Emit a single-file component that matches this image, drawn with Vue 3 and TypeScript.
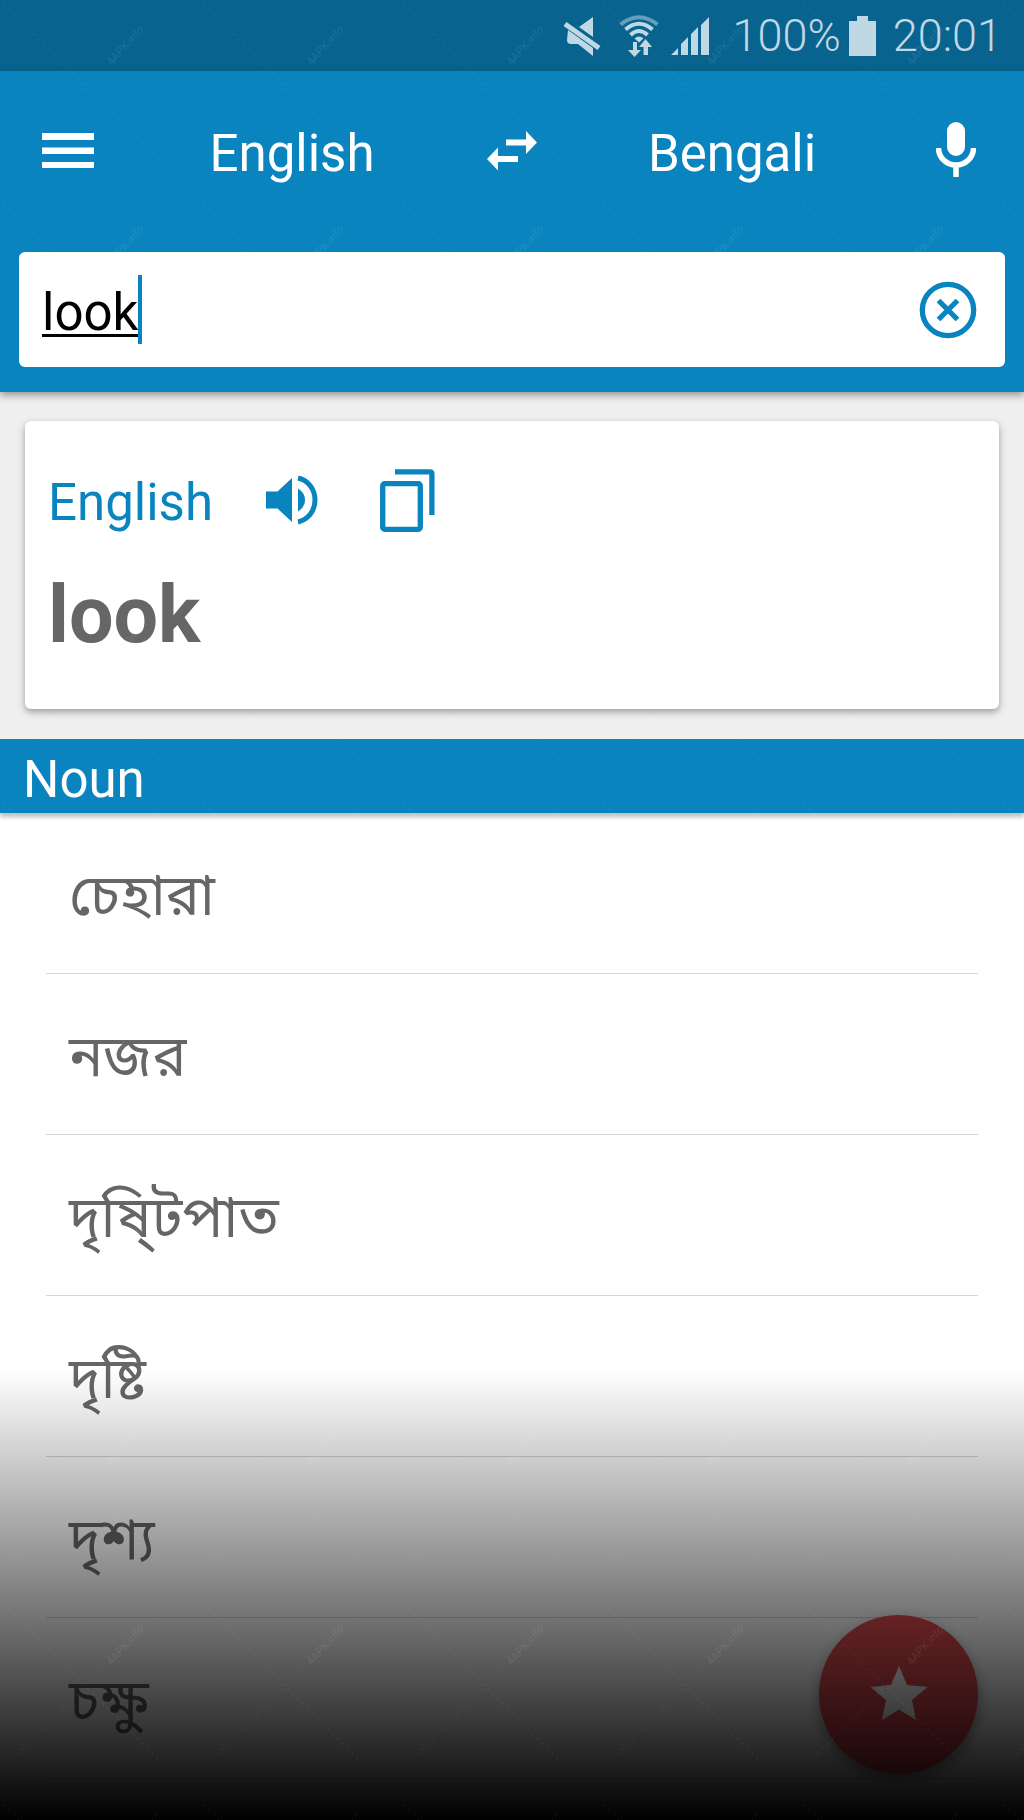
<script setup lang="ts">
import { ref } from 'vue'

const query = ref('look')
const nouns: string[] = ['চেহারা', 'নজর', 'দৃষি্টপাত', 'দৃষ্টি', 'দৃশ্য', 'চক্ষু']
</script>

<template>
  <div class="screen">
    <div class="status">
      <svg class="status-mute" width="38" height="40" viewBox="0 0 38 40" aria-hidden="true">
        <path d="M30 1v20L16 11zM5 14l25 18v8L15 28H8q-4 0-4-4z" fill="currentColor" />
        <path d="M2 8l34 24" stroke="currentColor" stroke-width="5" />
      </svg>
      <svg class="status-wifi" width="40" height="42" viewBox="0 0 40 42" fill="none" stroke="currentColor" stroke-width="4" aria-hidden="true">
        <path d="M1.500 9.500Q20-5 38.500 9.500" opacity=".5" />
        <path d="M6.500 14.500Q20 3 33.500 14.500M11.500 20Q20 12 28.500 20" />
        <path d="M15.500 23.500Q20 19.500 24.500 23.500L20 27.500z" fill="currentColor" stroke="none" />
        <path d="M14 27h4v8h4l-6.500 7L9 35h5zM24.500 40v-8H20l6.500-8 6.500 8h-4v8z" fill="currentColor" stroke="none" />
      </svg>
      <svg class="status-signal" width="38" height="38" viewBox="0 0 38 38" fill="currentColor" aria-hidden="true">
        <path d="M0 38l7-7v7zM10 38V27l7-7v18zM20 38V17l7-7v28zM30 38V8l8-8v38z" />
      </svg>
      <span>100%</span>
      <svg class="status-battery" width="27" height="40" viewBox="0 0 27 40" fill="currentColor" aria-hidden="true">
        <path d="M8 0h11v5h8v35H0V5h8z" />
      </svg>
      <span>20:01</span>
    </div>

    <header class="header">
      <nav class="toolbar">
        <button class="tool" type="button" aria-label="Menu">
          <svg width="52" height="36" viewBox="0 0 52 36" fill="currentColor" aria-hidden="true">
            <path d="M0 0h52v7H0zM0 14.500h52v6.500H0zM0 29h52v6H0z" />
          </svg>
        </button>
        <button class="language" type="button">English</button>
        <button class="tool" type="button" aria-label="Swap languages">
          <svg width="50" height="40" viewBox="0 0 50 40" fill="currentColor" aria-hidden="true">
            <path d="M50 11.500L39 0v8.500H19v6h20v8.500zM0 28l11-11.500V25h20v6H11v8.500z" />
          </svg>
        </button>
        <button class="language" type="button">Bengali</button>
        <button class="tool" type="button" aria-label="Voice input">
          <svg width="40" height="60" viewBox="0 0 40 60" aria-hidden="true">
            <rect x="11" y="1" width="18" height="34" rx="9" fill="currentColor" />
            <path d="M2.500 27a17.500 17 0 0 0 35 0M20 43v13" fill="none" stroke="currentColor" stroke-width="5.500" />
          </svg>
        </button>
      </nav>
      <div class="search">
        <input v-model="query" class="query" type="text" aria-label="Text to translate" />
        <span class="caret"></span>
        <button class="clear" type="button" aria-label="Clear text" @click="query = ''">
          <svg width="58" height="58" viewBox="0 0 58 58" fill="none" stroke="currentColor" aria-hidden="true">
            <circle cx="29" cy="29" r="25.700" stroke-width="5.300" />
            <path d="M19.500 19.500l19 19M38.500 19.500l-19 19" stroke-width="5.300" />
          </svg>
        </button>
      </div>
    </header>

    <section class="source">
      <article class="card">
        <div class="card-head">
          <span class="card-language">English</span>
          <button class="action" type="button" aria-label="Listen">
            <svg width="52" height="50" viewBox="0 0 52 50" aria-hidden="true">
              <path d="M0 16.500h11.500L26 3v44L11.500 33.500H0zM32 13.500Q39 18 39 25t-7 11.500z" fill="currentColor" />
              <path d="M32 3c11 2.500 17 12 17 22s-6 19.500-17 22" fill="none" stroke="currentColor" stroke-width="5" />
            </svg>
          </button>
          <button class="action" type="button" aria-label="Copy">
            <svg width="55" height="63" viewBox="0 0 55 63" fill="none" stroke="currentColor" stroke-width="5.300" aria-hidden="true">
              <rect x="2.700" y="14.700" width="37.600" height="45.600" rx="2" />
              <path d="M15 2.900h35q1.900 0 1.900 2V46" />
            </svg>
          </button>
        </div>
        <h1 class="word">{{ query }}</h1>
      </article>
    </section>

    <h2 class="part">Noun</h2>
    <ul class="meanings">
      <li v-for="noun in nouns" :key="noun" class="meaning" lang="bn">{{ noun }}</li>
    </ul>

    <button class="favourite" type="button" aria-label="Add to favourites">
      <svg width="58" height="58" viewBox="0 0 58 58" fill="currentColor" aria-hidden="true">
        <path d="M29 0l8 19 20.500 2L42 34l4 20-17-10.500L12 54l4-20L.500 21l20.500-2z" />
      </svg>
    </button>
    <div class="shade"></div>

    <svg class="watermark" width="100%" height="100%" aria-hidden="true">
      <defs>
        <pattern id="mark" width="200" height="200" patternUnits="userSpaceOnUse">
          <path d="M3 4L165 166M7 165L105 67M146 26L160 12" stroke="#fff" stroke-dasharray="3 4" />
          <text x="125" y="49" text-anchor="middle" transform="rotate(-48 125 45)">4APK.info</text>
        </pattern>
      </defs>
      <rect width="100%" height="100%" fill="url(#mark)" />
    </svg>
  </div>
</template>

<style>
body {
  margin: 0;
}
</style>

<style scoped>
.screen {
  position: relative;
  display: flex;
  flex-direction: column;
  min-height: 100vh;
  overflow: hidden;
  background: #fff;
  color: #666;
  font-family: Roboto, "Noto Sans Bengali", "Noto Sans", sans-serif;
  font-size: 51px;
  line-height: 60px;
}

button {
  display: flex;
  align-items: center;
  justify-content: center;
  padding: 0;
  border: 0;
  background: none;
  color: inherit;
  font: inherit;
  cursor: pointer;
}

svg {
  display: block;
  flex: none;
}

.status {
  display: flex;
  align-items: center;
  justify-content: flex-end;
  box-sizing: border-box;
  height: 71px;
  padding: 0 22px 0 0;
  background: #08648e;
  color: #c0d7e4;
  font-size: 45px;
  font-weight: 350;
}

.status-mute {
  margin-right: 18px;
}

.status-wifi {
  margin-right: 12px;
}

.status-signal {
  margin-right: 24px;
}

.status-battery {
  margin: 0 17px 0 8px;
}

.header {
  position: relative;
  padding: 0 19px 25px;
  background: #0984bf;
  color: #fff;
  box-shadow: 0 3px 8px rgba(0, 0, 0, 0.4);
}

.toolbar {
  display: grid;
  grid-template-columns: 136px 1fr 128px 1fr 136px;
  height: 160px;
  margin: 0 -19px 21px;
}

.language {
  padding-top: 6px;
}

.search {
  display: flex;
  align-items: center;
  height: 115px;
  padding: 0 28px 0 23px;
  border-radius: 6px;
  background: #fff;
}

.query {
  field-sizing: content;
  height: 68px;
  padding: 6px 0 0;
  border: 0;
  outline: 0;
  background: none;
  box-sizing: border-box;
  color: #000;
  font: inherit;
  text-decoration: underline 3px;
  text-underline-offset: 4px;
  text-decoration-skip-ink: none;
}

.caret {
  width: 4px;
  height: 69px;
  background: #0984bf;
}

.clear {
  margin-left: auto;
  color: #0984bf;
}

.source {
  padding: 29px 25px 30px;
  background: #efefef;
}

.card {
  box-sizing: border-box;
  height: 288px;
  padding: 47px 23px 0;
  border-radius: 6px;
  background: #fff;
  box-shadow: 0 3px 7px rgba(0, 0, 0, 0.35);
}

.card-head {
  display: flex;
  align-items: center;
  height: 64px;
  color: #0984bf;
}

.card-language {
  width: 218px;
  padding-top: 6px;
}

.action + .action {
  margin-left: 62px;
}

.word {
  margin: 35px 0 0;
  font-size: 79px;
  line-height: 96px;
  font-weight: 700;
}

.part {
  position: relative;
  box-sizing: border-box;
  height: 74px;
  margin: 0;
  padding: 11px 23px 0;
  background: #0984bf;
  color: #fff;
  font-size: 51px;
  font-weight: 400;
  box-shadow: 0 4px 4px rgba(0, 0, 0, 0.25);
}

.meanings {
  margin: 0;
  padding: 0 46px 41px;
  list-style: none;
}

.meaning {
  display: flex;
  align-items: center;
  box-sizing: border-box;
  height: 161px;
  padding: 5px 0 0 23px;
  border-bottom: 1px solid #d3d6da;
  font-size: 57px;
}

.favourite {
  position: absolute;
  right: 46px;
  bottom: 46px;
  width: 159px;
  height: 159px;
  border-radius: 50%;
  background: #e04a50;
  color: #fff;
  box-shadow: 0 6px 14px rgba(0, 0, 0, 0.4);
}

.shade {
  position: absolute;
  right: 0;
  bottom: 0;
  left: 0;
  height: 450px;
  background: linear-gradient(transparent, #000);
  pointer-events: none;
}

.watermark {
  position: absolute;
  top: 0;
  left: 0;
  opacity: 0.08;
  pointer-events: none;
}

.watermark text {
  fill: #fff;
  font-size: 11px;
}
</style>
